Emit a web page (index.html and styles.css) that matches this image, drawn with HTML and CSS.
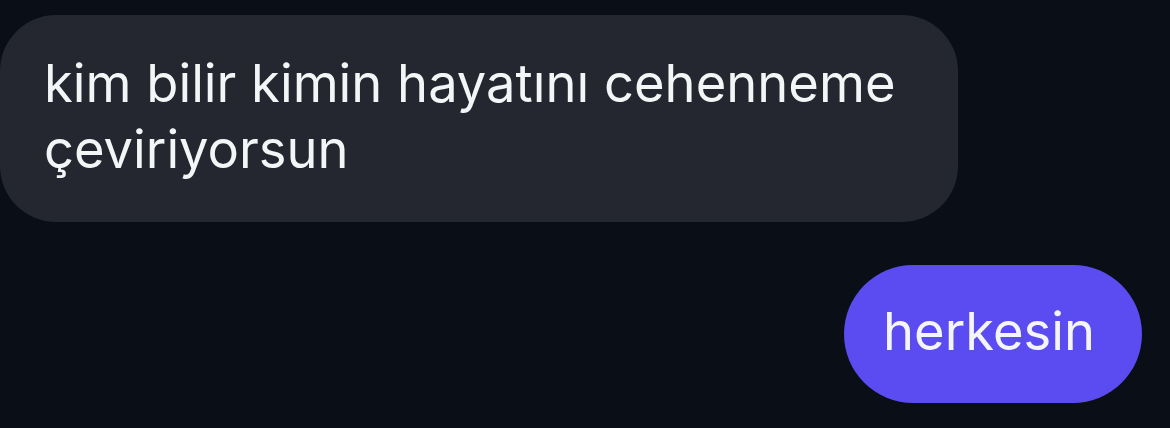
FILE: index.html
```html
<!DOCTYPE html>
<html lang="tr">
<head>
    <meta charset="UTF-8">
    <meta name="viewport" content="width=device-width, initial-scale=1.0">
    <title>Sohbet</title>
    <link rel="stylesheet" href="styles.css">
</head>
<body>

    <div class="chat">
        <div class="row row-in">
            <div class="bubble bubble-in">kim bilir kimin hayatını cehenneme<br>çeviriyorsun</div>
        </div>
        <div class="row row-out">
            <div class="bubble bubble-out">herkesin</div>
        </div>
    </div>

</body>
</html>
```

FILE: styles.css
```css
* { margin: 0; padding: 0; box-sizing: border-box; }
html, body { width: 100%; height: 100%; background-color: #0a0e16; overflow: hidden; }
body { font-family: Inter, "Noto Sans", sans-serif; color: #f4f5f7; }
.chat { display: flex; flex-direction: column; padding: 15px 28px 0 0; gap: 43px; }
.row { display: flex; }
.row-in { justify-content: flex-start; }
.row-out { justify-content: flex-end; }
.bubble { font-size: 52.5px; line-height: 66px; }
.bubble-in { background-color: #24272f; border-radius: 56px; padding: 35px 63px 40px 44px; }
.bubble-out { background-color: #5a4cf0; border-radius: 69px; height: 138px; padding: 33px 47px 0 39px; }
```
